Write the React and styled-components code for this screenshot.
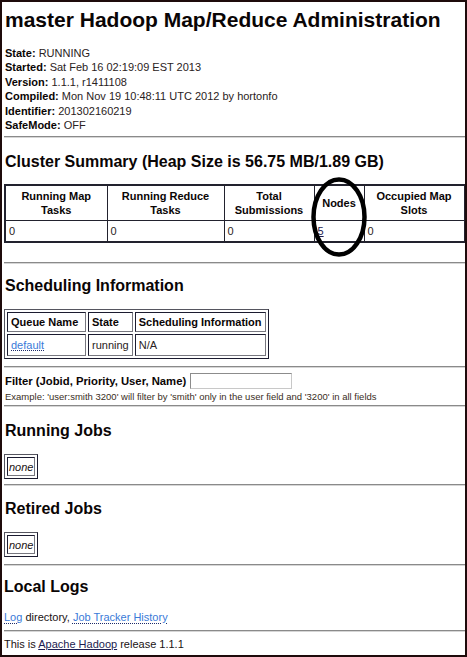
import React from "react";
import styled, { createGlobalStyle } from "styled-components";

const GlobalStyle = createGlobalStyle`
	body {
		margin: 0;
		background: #fff;
	}
`;

const clusterColumns = [
	{ title: ["Running Map", "Tasks"], value: "0", width: 102 },
	{ title: ["Running Reduce", "Tasks"], value: "0", width: 117 },
	{ title: ["Total", "Submissions"], value: "0", width: 90 },
	{ title: ["Nodes"], value: "5", link: true, width: 50 },
	{ title: ["Occupied Map", "Slots"], value: "0", width: 100 },
	{ title: ["Occupied Reduce", "Slots"], value: "0", width: 110 },
	{ title: ["Reserved Map", "Slots"], value: "0", width: 100 },
	{ title: ["Reserved Reduce", "Slots"], value: "0", width: 110 },
];

const info = [
	["State:", "RUNNING"],
	["Started:", "Sat Feb 16 02:19:09 EST 2013"],
	["Version:", "1.1.1, r1411108"],
	["Compiled:", "Mon Nov 19 10:48:11 UTC 2012 by hortonfo"],
	["Identifier:", "201302160219"],
	["SafeMode:", "OFF"],
];

function App() {
	return (
		<>
			<GlobalStyle />
			<Frame>
				<Title>master Hadoop Map/Reduce Administration</Title>
				<Info>
					{info.map(([label, value]) => (
						<div key={label}>
							<b>{label}</b> {value}
						</div>
					))}
				</Info>

				<Hr $mt={3.6} />
				<Heading $mt={14}>Cluster Summary (Heap Size is 56.75 MB/1.89 GB)</Heading>
				<ClusterTable>
					<colgroup>
						{clusterColumns.map((c, i) => (
							<col key={i} style={{ width: c.width }} />
						))}
					</colgroup>
					<tbody>
						<tr>
							{clusterColumns.map((c, i) => (
								<ClusterHead key={i}>
									{c.title.map((line) => (
										<div key={line}>{line}</div>
									))}
								</ClusterHead>
							))}
						</tr>
						<tr>
							{clusterColumns.map((c, i) => (
								<ClusterCell key={i}>
									{c.link ? <VisitedLink href="#">{c.value}</VisitedLink> : c.value}
								</ClusterCell>
							))}
						</tr>
					</tbody>
				</ClusterTable>
				<Oval width="62" height="86" viewBox="0 0 62 86">
					<ellipse cx="31" cy="43" rx="25.5" ry="37.5" fill="none" stroke="#000" strokeWidth="4.5" />
				</Oval>

				<Hr $mt={19} />
				<Heading $mt={12}>Scheduling Information</Heading>
				<BoxTable $mt={13}>
					<tbody>
						<tr>
							<BoxHead style={{ width: 71 }}>Queue Name</BoxHead>
							<BoxHead>State</BoxHead>
							<BoxHead>Scheduling Information</BoxHead>
						</tr>
						<tr>
							<BoxCell>
								<Link href="#">default</Link>
							</BoxCell>
							<BoxCell>running</BoxCell>
							<BoxCell>N/A</BoxCell>
						</tr>
					</tbody>
				</BoxTable>

				<Hr $mt={7} />
				<FilterRow>
					<b>Filter (Jobid, Priority, User, Name)</b>
					<FilterInput type="text" />
				</FilterRow>
				<Example>
					Example: 'user:smith 3200' will filter by 'smith' only in the user field and '3200' in all fields
				</Example>

				<Hr $mt={3} />
				<Heading $mt={14.7}>Running Jobs</Heading>
				<BoxTable $mt={12.3}>
					<tbody>
						<tr>
							<NoneCell>none</NoneCell>
						</tr>
					</tbody>
				</BoxTable>

				<Hr $mt={5} />
				<Heading $mt={13.7}>Retired Jobs</Heading>
				<BoxTable $mt={12.3}>
					<tbody>
						<tr>
							<NoneCell>none</NoneCell>
						</tr>
					</tbody>
				</BoxTable>

				<Hr $mt={7} />
				<Heading $mt={11.7} $ml={0}>Local Logs</Heading>
				<Line $mt={13.3}>
					<Link href="#">Log</Link> directory, <Link href="#">Job Tracker History</Link>
				</Line>

				<Hr $mt={6} />
				<Line $mt={5}>
					This is <VisitedLink href="#">Apache Hadoop</VisitedLink> release 1.1.1
				</Line>
			</Frame>
		</>
	);
}

const Frame = styled.div`
	position: relative;
	box-sizing: border-box;
	width: 467px;
	height: 657px;
	border: 2px solid #1e0b0b;
	padding-left: 2px;
	overflow: hidden;
	font-family: "Liberation Sans", Arial, sans-serif;
	color: #0a0505;
	background: #fff;
`;

const Title = styled.h1`
	margin: 6px 0 0 1px;
	font-size: 21px;
	line-height: 24px;
	font-weight: bold;
	white-space: nowrap;
`;

const Info = styled.div`
	margin: 14px 0 0 1px;
	font-size: 11px;
	line-height: 14.4px;
	color: #2a2222;

	b {
		color: #0a0505;
	}
`;

const Hr = styled.div`
	margin-top: ${(p) => p.$mt}px;
	height: 0;
	border-top: 1px solid #8a8a8a;
	border-bottom: 1px solid #d6d6d6;
`;

const Heading = styled.h2`
	margin: ${(p) => p.$mt}px 0 0 ${(p) => (p.$ml ?? 1)}px;
	font-size: 16px;
	line-height: 20px;
	font-weight: bold;
	white-space: nowrap;
`;

const ClusterTable = styled.table`
	margin-top: 12px;
	border-collapse: collapse;
	table-layout: fixed;
	width: 779px;
	border: 2px solid #22222e;
	font-size: 11px;
	line-height: 14px;
`;

const ClusterHead = styled.th`
	height: 27px;
	padding: 3px 2px;
	border: 1px solid #22222e;
	font-weight: bold;
	text-align: center;
	vertical-align: middle;
	white-space: nowrap;
`;

const ClusterCell = styled.td`
	height: 14px;
	padding: 3px 3px 3px 3px;
	border: 1px solid #22222e;
	color: #2a2222;
`;

const Oval = styled.svg`
	position: absolute;
	left: 306px;
	top: 172px;
`;

const BoxTable = styled.table`
	margin-top: ${(p) => p.$mt}px;
	border-collapse: separate;
	border-spacing: 2px;
	border: 1px solid #55555f;
	border-right-color: #1c1c30;
	border-bottom-color: #1c1c30;
	font-size: 11px;
	line-height: 14px;
`;

const BoxHead = styled.th`
	padding: 2px 3px;
	border: 1px solid #1c1c30;
	border-right-color: #77777f;
	border-bottom-color: #77777f;
	font-weight: bold;
	text-align: left;
	white-space: nowrap;
`;

const BoxCell = styled.td`
	padding: 3px 3px;
	border: 1px solid #1c1c30;
	border-right-color: #77777f;
	border-bottom-color: #77777f;
	color: #2a2222;
	white-space: nowrap;
`;

const NoneCell = styled.td`
	padding: 3px 1px 2px 1px;
	border: 1px solid #1c1c30;
	border-right-color: #77777f;
	border-bottom-color: #77777f;
	font-style: italic;
	line-height: 12px;
	color: #1a1212;
`;

const FilterRow = styled.div`
	display: flex;
	align-items: center;
	gap: 4px;
	margin: 4px 0 0 1px;
	height: 17px;
	font-size: 11.3px;
	line-height: 14px;
	white-space: nowrap;
`;

const FilterInput = styled.input`
	box-sizing: border-box;
	width: 102px;
	height: 16px;
	margin: 0;
	padding: 0 2px;
	border: 1px solid #8c8c8c;
	border-bottom-color: #c8c8c8;
	border-right-color: #c8c8c8;
	background: #fff;
	outline: none;
`;

const Example = styled.div`
	margin: 1.5px 0 0 1px;
	font-size: 9.5px;
	line-height: 11px;
	color: #3a2e1c;
	white-space: nowrap;
`;

const Line = styled.div`
	margin-top: ${(p) => p.$mt}px;
	font-size: 11px;
	line-height: 14px;
	color: #1a1212;
	white-space: nowrap;
`;

const Link = styled.a`
	color: #3a7ad8;
	text-decoration: underline dotted #1c2a6a;
`;

const VisitedLink = styled.a`
	color: #1c1c50;
	text-decoration: underline;
`;

export default App;
